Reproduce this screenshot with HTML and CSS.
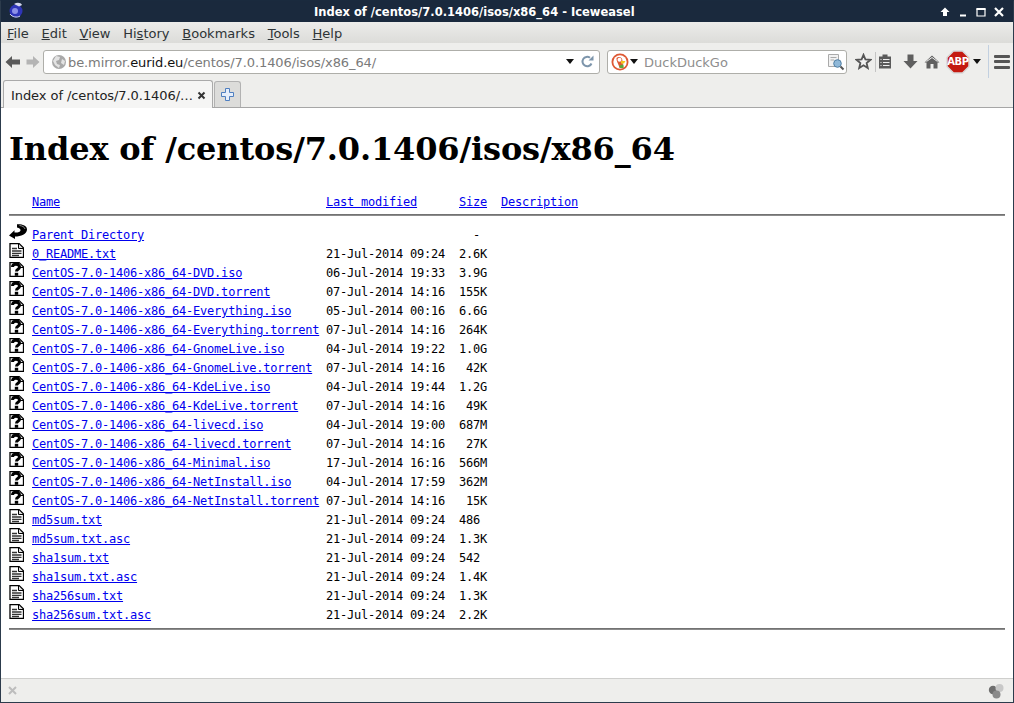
FILE: index.html
```html
<!DOCTYPE html>
<html lang="en">
<head>
<meta charset="utf-8">
<title>Index of /centos/7.0.1406/isos/x86_64 - Iceweasel</title>
<link rel="stylesheet" href="styles.css">
</head>
<body>
<svg class="defs" width="0" height="0">
  <symbol id="i-txt" viewBox="0 0 15 15">
    <path d="M1 .5H10L14.500 5V14.500H1Z" fill="#fff" stroke="#000" stroke-width="1.300"/>
    <path d="M9.500 1V5.500H14" fill="#ddd" stroke="#000"/>
    <path d="M3 5.500H8M3 8H12.500M3 10.300H12.500M3 12.500H10" stroke="#333" stroke-width="1.300"/>
  </symbol>
  <symbol id="i-unk" viewBox="0 0 15 15">
    <path d="M1 .5H10L14.500 5V14.500H1Z" fill="#fff" stroke="#000" stroke-width="1.300"/>
    <path d="M9.500 1V5.500H14" fill="#ddd" stroke="#000"/>
    <path d="M3.500 5C3.500 1.500 10.500 1.200 10.500 5C10.500 7.500 7.500 7 7.500 9.500" fill="none" stroke="#000" stroke-width="3"/>
    <rect x="5.800" y="10.800" width="3.400" height="3"/>
  </symbol>
  <symbol id="i-back" viewBox="0 0 18 15">
    <path d="M0 11.500L5.500 6.300V8.500C9 8.700 11 8 11.500 6.500C11.800 5 10.500 4 8 3.500V.3C13 0 18 1.500 18 5.500C18 10 12 12.500 6 12.500V15Z" fill="#000"/>
    <path d="M10.500 1.500C13 1.800 15.500 2.800 16 5" stroke="#888" fill="none"/>
  </symbol>
</svg>
<div class="window">
  <header class="titlebar">
    <svg class="globe" width="16" height="18" viewBox="0 0 16 18"><circle cx="8" cy="10" r="6.500" fill="#2f35b8"/><circle cx="7" cy="10" r="3" fill="#8c90e6"/><path d="M6 3C9 1 13 1.500 14 4L11 5.500Z" fill="#d5d8ee"/><path d="M2 13C4 16 9 17 12 15" stroke="#d7daf0" fill="none"/></svg>
    <div class="title-text">Index of /centos/7.0.1406/isos/x86_64 - Iceweasel</div>
    <div class="wm-buttons">
      <svg width="12" height="12" viewBox="0 0 12 12"><path d="M6 1.500L10.500 6H8V10H4V6H1.500Z" fill="#fff"/></svg>
      <svg width="12" height="12" viewBox="0 0 12 12"><rect x="3" y="8.500" width="6" height="2" fill="#fff"/></svg>
      <svg width="12" height="12" viewBox="0 0 12 12"><path d="M2 3H10V10H2Z" fill="none" stroke="#fff" stroke-width="1.200"/><rect x="1.500" y="2" width="9" height="2" fill="#fff"/></svg>
      <svg width="12" height="12" viewBox="0 0 12 12"><path d="M2 2L10 10M10 2L2 10" stroke="#fff" stroke-width="2.200"/></svg>
    </div>
  </header>
  <nav class="menubar">
    <span><u>F</u>ile</span><span><u>E</u>dit</span><span><u>V</u>iew</span><span>Hi<u>s</u>tory</span><span><u>B</u>ookmarks</span><span><u>T</u>ools</span><span><u>H</u>elp</span>
  </nav>
  <div class="navbar">
    <svg class="nav-back" width="16" height="14" viewBox="0 0 16 14"><path d="M0.500 7L7 1V4.500H15V9.500H7V13Z" fill="#5a5a5a"/></svg>
    <svg class="nav-fwd" width="14" height="14" viewBox="0 0 14 14"><path d="M13.500 7L7 1V4.500H0.500V9.500H7V13Z" fill="#b4b4b4"/></svg>
    <div class="urlbar">
      <svg class="url-globe" width="16" height="16" viewBox="0 0 16 16"><circle cx="8" cy="8" r="7" fill="#a9a9a9"/><path d="M5 2L9 3L8 6L5 7L6 10L9 11L8 14L4 11L2 7Z" fill="#e3e3e3"/><path d="M11 5L14 7L13 11L10 9Z" fill="#e3e3e3"/></svg>
      <div class="url-text">be.mirror.<b>eurid.eu</b>/centos/7.0.1406/isos/x86_64/</div>
      <span class="caret"></span>
      <svg class="reload" width="13" height="13" viewBox="0 0 13 13"><path d="M10.500 8.500A4.700 4.700 0 1 1 9 2.800" fill="none" stroke="#7d95ab" stroke-width="2"/><path d="M7.500 5.500H12.500V0.500Z" fill="#7d95ab"/></svg>
    </div>
    <div class="searchbar">
      <svg class="ddg" width="18" height="18" viewBox="0 0 18 18"><circle cx="9" cy="9" r="8.500" fill="#de5833"/><circle cx="9" cy="9" r="6.700" fill="#fff"/><path d="M5.500 5C8 3 11.500 4.500 11.500 8C11.500 10 12 12 12.500 14.500H8.500C7.500 11 5 8 5.500 5Z" fill="#de5833"/><circle cx="8.500" cy="6.800" r="2" fill="#fff"/><path d="M10 8H14.500L13 10.500H10Z" fill="#f5c518"/><path d="M8.500 12.500L12.500 11.500V15H8.500Z" fill="#5aa83a"/></svg>
      <span class="caret caret-search"></span>
      <div class="search-text">DuckDuckGo</div>
      <svg class="search-icon" width="18" height="18" viewBox="0 0 18 18"><path d="M1.500 1.500H11.500V13.500H1.500Z" fill="#f2f2f2" stroke="#aaa"/><path d="M3.500 4.500H9.500M3.500 7H7" stroke="#aaa"/><circle cx="10.500" cy="10.500" r="3.800" fill="#8fb8d8" stroke="#4f7ea3"/><path d="M13.500 13.500L16.500 16.500" stroke="#555" stroke-width="2"/></svg>
    </div>
    <div class="tools">
      <svg class="t-star" width="17" height="17" viewBox="0 0 17 17"><path d="M8.500 1.800L10.400 6.400L15.400 6.800L11.600 10L12.800 15L8.500 12.300L4.200 15L5.400 10L1.600 6.800L6.600 6.400Z" fill="#f2f2f2" stroke="#555" stroke-width="1.800"/></svg>
      <span class="t-sep"></span>
      <svg class="t-list" width="14" height="17" viewBox="0 0 14 17"><path d="M1 3.500H4.500V1.500H9.500V3.500H13V15.500H1Z" fill="#5a5a5a"/><path d="M2.500 6.500H3.500M5 6.500H11.500M2.500 9.500H3.500M5 9.500H11.500M2.500 12.500H3.500M5 12.500H11.500" stroke="#eee"/></svg>
      <svg class="t-down" width="15" height="15" viewBox="0 0 15 15"><path d="M4.500 0.500H10.500V7H14.500L7.500 14.500L0.500 7H4.500Z" fill="#5f5f5f"/></svg>
      <svg class="t-home" width="16" height="14" viewBox="0 0 16 14"><path d="M8 0.500L15.500 7.500H13.500V13.500H9.500V9H6.500V13.500H2.500V7.500H0.500Z" fill="#5f5f5f"/><path d="M2.500 6.500L8 2.500L13.500 6.500" stroke="#eee" fill="none"/></svg>
      <div class="abp"><svg width="24" height="24" viewBox="0 0 24 24"><path d="M7.500 1H16.500L23 7.500V16.500L16.500 23H7.500L1 16.500V7.500Z" fill="#c41a10" stroke="#d8d8d8" stroke-width="1.500"/></svg><span>ABP</span></div>
      <span class="caret caret-abp"></span>
      <span class="t-sep2"></span>
      <div class="hamburger"><i></i><i></i><i></i></div>
    </div>
  </div>
  <div class="tabstrip">
    <div class="tab"><span class="tab-title">Index of /centos/7.0.1406/…</span><svg width="9" height="9" viewBox="0 0 9 9"><path d="M1.500 1.500L7.500 7.500M7.500 1.500L1.500 7.500" stroke="#333" stroke-width="2"/></svg></div>
    <div class="newtab"><svg width="13" height="13" viewBox="0 0 13 13"><path d="M4.500 0.500H8.500V4.500H12.500V8.500H8.500V12.500H4.500V8.500H0.500V4.500H4.500Z" fill="#e6eefa" stroke="#4f7fc0"/></svg></div>
  </div>
  <main class="page">
    <h1>Index of /centos/7.0.1406/isos/x86_64</h1>
    <div class="listing">
      <div class="row head"><span class="ic"></span><a href="#">Name</a><a href="#">Last modified</a><a class="r" href="#">Size</a><a class="desc" href="#">Description</a></div>
      <hr>
      <div class="row"><svg class="ic ic-back"><use href="#i-back"/></svg><a href="#">Parent Directory</a><span></span><span class="r">-&nbsp;</span></div>
      <div class="row"><svg class="ic"><use href="#i-txt"/></svg><a href="#">0_README.txt</a><span>21-Jul-2014 09:24</span><span class="r">2.6K</span></div>
      <div class="row"><svg class="ic"><use href="#i-unk"/></svg><a href="#">CentOS-7.0-1406-x86_64-DVD.iso</a><span>06-Jul-2014 19:33</span><span class="r">3.9G</span></div>
      <div class="row"><svg class="ic"><use href="#i-unk"/></svg><a href="#">CentOS-7.0-1406-x86_64-DVD.torrent</a><span>07-Jul-2014 14:16</span><span class="r">155K</span></div>
      <div class="row"><svg class="ic"><use href="#i-unk"/></svg><a href="#">CentOS-7.0-1406-x86_64-Everything.iso</a><span>05-Jul-2014 00:16</span><span class="r">6.6G</span></div>
      <div class="row"><svg class="ic"><use href="#i-unk"/></svg><a href="#">CentOS-7.0-1406-x86_64-Everything.torrent</a><span>07-Jul-2014 14:16</span><span class="r">264K</span></div>
      <div class="row"><svg class="ic"><use href="#i-unk"/></svg><a href="#">CentOS-7.0-1406-x86_64-GnomeLive.iso</a><span>04-Jul-2014 19:22</span><span class="r">1.0G</span></div>
      <div class="row"><svg class="ic"><use href="#i-unk"/></svg><a href="#">CentOS-7.0-1406-x86_64-GnomeLive.torrent</a><span>07-Jul-2014 14:16</span><span class="r">42K</span></div>
      <div class="row"><svg class="ic"><use href="#i-unk"/></svg><a href="#">CentOS-7.0-1406-x86_64-KdeLive.iso</a><span>04-Jul-2014 19:44</span><span class="r">1.2G</span></div>
      <div class="row"><svg class="ic"><use href="#i-unk"/></svg><a href="#">CentOS-7.0-1406-x86_64-KdeLive.torrent</a><span>07-Jul-2014 14:16</span><span class="r">49K</span></div>
      <div class="row"><svg class="ic"><use href="#i-unk"/></svg><a href="#">CentOS-7.0-1406-x86_64-livecd.iso</a><span>04-Jul-2014 19:00</span><span class="r">687M</span></div>
      <div class="row"><svg class="ic"><use href="#i-unk"/></svg><a href="#">CentOS-7.0-1406-x86_64-livecd.torrent</a><span>07-Jul-2014 14:16</span><span class="r">27K</span></div>
      <div class="row"><svg class="ic"><use href="#i-unk"/></svg><a href="#">CentOS-7.0-1406-x86_64-Minimal.iso</a><span>17-Jul-2014 16:16</span><span class="r">566M</span></div>
      <div class="row"><svg class="ic"><use href="#i-unk"/></svg><a href="#">CentOS-7.0-1406-x86_64-NetInstall.iso</a><span>04-Jul-2014 17:59</span><span class="r">362M</span></div>
      <div class="row"><svg class="ic"><use href="#i-unk"/></svg><a href="#">CentOS-7.0-1406-x86_64-NetInstall.torrent</a><span>07-Jul-2014 14:16</span><span class="r">15K</span></div>
      <div class="row"><svg class="ic"><use href="#i-txt"/></svg><a href="#">md5sum.txt</a><span>21-Jul-2014 09:24</span><span class="r">486&nbsp;</span></div>
      <div class="row"><svg class="ic"><use href="#i-txt"/></svg><a href="#">md5sum.txt.asc</a><span>21-Jul-2014 09:24</span><span class="r">1.3K</span></div>
      <div class="row"><svg class="ic"><use href="#i-txt"/></svg><a href="#">sha1sum.txt</a><span>21-Jul-2014 09:24</span><span class="r">542&nbsp;</span></div>
      <div class="row"><svg class="ic"><use href="#i-txt"/></svg><a href="#">sha1sum.txt.asc</a><span>21-Jul-2014 09:24</span><span class="r">1.4K</span></div>
      <div class="row"><svg class="ic"><use href="#i-txt"/></svg><a href="#">sha256sum.txt</a><span>21-Jul-2014 09:24</span><span class="r">1.3K</span></div>
      <div class="row"><svg class="ic"><use href="#i-txt"/></svg><a href="#">sha256sum.txt.asc</a><span>21-Jul-2014 09:24</span><span class="r">2.2K</span></div>
      <hr class="end">
    </div>
  </main>
  <footer class="statusbar">
    <svg width="9" height="9" viewBox="0 0 9 9"><path d="M1 1L8 8M8 1L1 8" stroke="#bdbdbd" stroke-width="2"/></svg>
    <svg width="16" height="16" viewBox="0 0 16 16"><circle cx="5" cy="7" r="4.200" fill="#6e6e6e"/><circle cx="11.500" cy="5" r="4" fill="#c8c8c8"/><circle cx="8.500" cy="11.500" r="4" fill="#8a8a8a"/></svg>
  </footer>
</div>
</body>
</html>
```
FILE: styles.css
```css
* { box-sizing: border-box; }
html, body { margin: 0; padding: 0; }
body { width: 1014px; height: 703px; overflow: hidden; background: #fff; font-family: "DejaVu Sans", sans-serif; }
.defs { position: absolute; }
.window { height: 703px; display: flex; flex-direction: column; border: 1px solid #2c3b4c; border-top-color: #1a2a3e; }

.titlebar { height: 21px; flex: none; background: #1a293d; color: #fff; display: flex; align-items: center; position: relative; padding-left: 7px; }
.globe { margin-top: -3px; }
.title-text { position: absolute; left: 313px; top: 3px; font-size: 11.5px; font-weight: bold; line-height: 16px; white-space: nowrap; }
.wm-buttons { margin-left: auto; display: flex; gap: 6px; margin-right: 8px; }

.menubar { height: 21px; flex: none; display: flex; gap: 12.8px; padding: 2px 0 0 6px; align-items: center; font-size: 13px; color: #2e3436; background: linear-gradient(#ececea, #dcdcd9); }
.navbar { height: 37px; flex: none; display: flex; align-items: center; background: #eeeeec; padding-left: 4px; }
.nav-back { margin-right: 5px; }
.nav-fwd { margin-right: 3px; }
.urlbar { width: 557px; height: 24px; display: flex; align-items: center; background: #fff; border: 1px solid #aeaea9; border-radius: 3px; padding: 0 5px 0 7px; }
.url-text { flex: 1; margin-left: 1px; padding-top: 2px; font-size: 13px; letter-spacing: -0.09px; color: #7a7a7a; white-space: nowrap; }
.url-text b { font-weight: normal; color: #111; }
.caret { width: 0; height: 0; flex: none; border-left: 4.5px solid transparent; border-right: 4.5px solid transparent; border-top: 5px solid #111; }
.reload { margin-left: 7px; }
.searchbar { width: 240px; height: 24px; margin-left: 7px; display: flex; align-items: center; background: #fff; border: 1px solid #aeaea9; border-radius: 3px; padding: 0 1px 0 3px; }
.caret-search { margin-left: 1px; }
.search-text { flex: 1; margin-left: 6px; padding-top: 2px; font-size: 13px; color: #8e8e8e; }
.tools { display: flex; align-items: center; margin-left: 8px; height: 37px; }
.t-sep { width: 1px; height: 20px; background: #c4c4c4; margin: 0 2px 0 3px; }
.t-list { margin-right: 11px; }
.t-down { margin-right: 6px; }
.t-home { margin-right: 6px; }
.abp { position: relative; width: 24px; height: 24px; }
.abp svg { display: block; }
.abp span { position: absolute; left: 0; right: 0; top: 5px; text-align: center; color: #fff; font-size: 10px; font-weight: bold; line-height: 14px; letter-spacing: -0.4px; }
.caret-abp { margin-left: 3px; }
.t-sep2 { width: 1px; height: 33px; background: #c2d0e0; margin-left: 7px; }
.hamburger { display: flex; flex-direction: column; gap: 2.5px; margin-left: 5px; }
.hamburger i { display: block; width: 16px; height: 3px; background: #555; border-radius: 1px; }

.tabstrip { height: 28px; flex: none; display: flex; align-items: flex-end; gap: 1px; padding-left: 2px; background: #eeeeec; border-bottom: 1px solid #a6a6a6; }
.tab { width: 210px; height: 28px; margin-bottom: -1px; display: flex; align-items: center; justify-content: space-between; padding: 2px 6px 0 7px; background: #f5f5f4; border: 1px solid #aaa; border-bottom: none; border-radius: 3px 3px 0 0; font-size: 13px; letter-spacing: -0.07px; color: #222; }
.newtab { width: 27px; height: 26px; display: flex; align-items: center; justify-content: center; background: #dcdcda; border: 1px solid #b2b2b2; border-bottom: none; border-radius: 3px 3px 0 0; }

.page { flex: 1; min-height: 0; background: #fff; padding: 8px; color: #000; overflow: hidden; }
h1 { margin: 0; padding-top: 15px; font: bold 32px/37px "DejaVu Serif", serif; letter-spacing: -0.14px; color: #000; }
.listing { margin-top: 25px; font: 12px/19px "DejaVu Sans Mono", monospace; letter-spacing: -0.22px; }
.row { display: grid; grid-template-columns: 23px 294px 133px 28px auto; align-items: center; height: 19px; white-space: pre; }
.row a { color: #0000ee; text-decoration: underline; }
.ic { display: block; width: 15px; height: 15px; align-self: start; margin-top: -2px; }
.ic-back { width: 18px; }
.r { text-align: right; }
.desc { margin-left: 14px; }
hr { margin: 2px 0 10px; border: none; height: 2px; background: linear-gradient(#666, #999); }
hr.end { margin: 3px 0 0; }

.statusbar { height: 24px; flex: none; display: flex; align-items: center; justify-content: space-between; padding: 0 9px 0 7px; background: #eeeeec; border-top: 1px solid #cfcfcd; }
```
